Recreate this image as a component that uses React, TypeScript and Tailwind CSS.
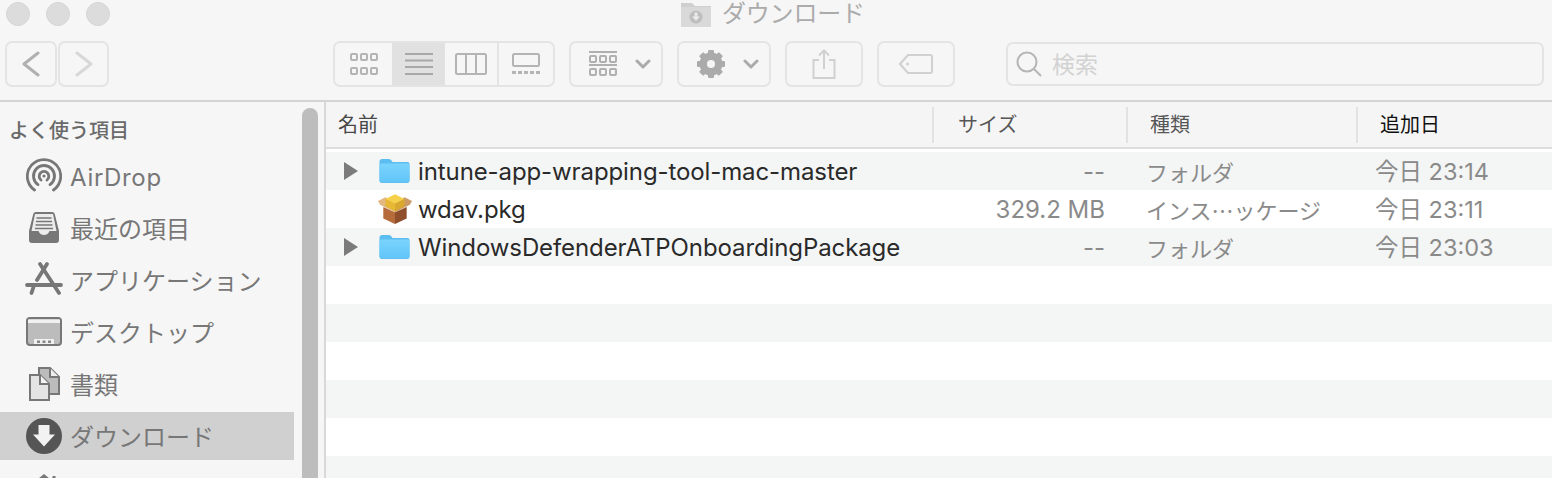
import type { ReactNode } from 'react'

const font = { sans: 'font-["Inter","Noto_Sans_CJK_JP",sans-serif]' }

function ToolButton({ className, children }: { className: string; children: ReactNode }) {
  return (
    <div className={`flex h-[46px] items-center justify-center rounded-[7px] border-2 border-[#e4e4e4] ${className}`}>
      {children}
    </div>
  )
}

function Folder() {
  return (
    <svg width="31" height="26" viewBox="0 0 31 26">
      <defs>
        <linearGradient id="folderBody" x1="0" y1="0" x2="0" y2="1">
          <stop offset="0" stopColor="#7ad3fd" />
          <stop offset="1" stopColor="#62c5f8" />
        </linearGradient>
      </defs>
      <path d="M0.500 3.500Q0.500 1 3 1H10Q11.500 1 12.500 2.500L13.500 4H28.500Q30.500 4 30.500 6V22.500Q30.500 25 28 25H3Q0.500 25 0.500 22.500Z" fill="#5cbdf0" />
      <path d="M0.500 7Q0.500 5.500 2.500 5.500H28.500Q30.500 5.500 30.500 7V22.500Q30.500 24.200 28 24.200H3Q0.500 24.200 0.500 22.500Z" fill="url(#folderBody)" />
    </svg>
  )
}

function Pkg() {
  return (
    <svg width="34" height="30" viewBox="1 1 32 28">
      <path d="M6 13L17 18V29L6 24Z" fill="#b56b3a" />
      <path d="M28 13L17 18V29L28 24Z" fill="#8f4f2b" />
      <path d="M17 18L3 11L1 7.500L8 4L17 9Z" fill="#e2b781" />
      <path d="M17 18L31 11L33 7.500L26 4L17 9Z" fill="#cc9a66" />
      <path d="M8 5.500L17 1L26 5.500L17 10Z" fill="#f5d04a" />
      <path d="M8 5.500L17 10V17L8 12.500Z" fill="#e6b834" />
      <path d="M26 5.500L17 10V17L26 12.500Z" fill="#d8a92e" />
    </svg>
  )
}

function Caret() {
  return (
    <svg width="16" height="20" viewBox="0 0 16 20">
      <path d="M1 1L15 10L1 19Z" fill="#7b7b7b" />
    </svg>
  )
}

const rows = [
  { name: 'intune-app-wrapping-tool-mac-master', size: '--', kind: 'フォルダ', date: '今日 23:14', folder: true },
  { name: 'wdav.pkg', size: '329.2 MB', kind: 'インス…ッケージ', date: '今日 23:11', folder: false },
  { name: 'WindowsDefenderATPOnboardingPackage', size: '--', kind: 'フォルダ', date: '今日 23:03', folder: true },
]

const sideIcons: Record<string, ReactNode> = {
  airdrop: (
    <svg width="36" height="36" viewBox="0 0 36 36" fill="none" stroke="#777" strokeWidth="2.800" strokeLinecap="round">
      <path d="M8.500 32A16.700 16.700 0 1 1 27.500 32" />
      <path d="M12 26.600A10.500 10.500 0 1 1 24 26.600" />
      <path d="M15 22A4.800 4.800 0 1 1 21 22" />
      <circle cx="18" cy="18" r="1.600" fill="#777" stroke="none" />
    </svg>
  ),
  recent: (
    <svg width="34" height="34" viewBox="0 0 34 34">
      <path d="M6 4Q6.500 1 9 1H25Q27.500 1 28 4L32 20V29Q32 32 29 32H5Q2 32 2 29V20Z" fill="#777" />
      <path d="M8 3H26L29.500 20H22.500Q21 24 17 24Q13 24 11.500 20H4.500Z" fill="#ececec" />
      <path d="M9.500 7H24.500M9 10.500H25M8.500 14H25.500M8 17.500H26" stroke="#777" strokeWidth="1.500" />
    </svg>
  ),
  apps: (
    <svg width="38" height="36" viewBox="0 0 38 36" fill="none" stroke="#777" strokeLinecap="round">
      <path d="M15 2L34 31" strokeWidth="3.800" />
      <path d="M22 2L12 18" strokeWidth="3.800" />
      <path d="M8.500 25L6.500 31" strokeWidth="3.800" />
      <path d="M2 23H36" strokeWidth="3.800" />
    </svg>
  ),
  desktop: (
    <svg width="36" height="30" viewBox="0 0 36 30">
      <rect x="1" y="1" width="34" height="27" rx="3" fill="#bcbcbc" stroke="#777" strokeWidth="2" />
      <path d="M2 2.500H34V6H2Z" fill="#f0f0f0" />
      <path d="M8 27V22H28V27Z" fill="#f0f0f0" />
      <path d="M11 23.500H14V26H11ZM16.500 23.500H19.500V26H16.500ZM22 23.500H25V26H22Z" fill="#888" />
    </svg>
  ),
  docs: (
    <svg width="33" height="34" viewBox="0 0 33 34">
      <path d="M11 1H22L31 10V27H11Z" fill="#bcbcbc" stroke="#777" strokeWidth="2" />
      <path d="M22 1V10H31" fill="#eee" stroke="#777" strokeWidth="2" />
      <path d="M2 8H12L21 17V33H2Z" fill="#e4e4e4" stroke="#777" strokeWidth="2" />
      <path d="M12 8V17H21" fill="#f4f4f4" stroke="#777" strokeWidth="2" />
    </svg>
  ),
  downloads: (
    <svg width="36" height="36" viewBox="0 0 36 36">
      <circle cx="18" cy="18" r="18" fill="#555" />
      <path d="M12.500 7H23.500V16.500H29L18 28.500L7 16.500H12.500Z" fill="#f2f2f2" />
    </svg>
  ),
  home: (
    <svg width="36" height="30" viewBox="0 0 36 30" fill="none" stroke="#777" strokeWidth="3">
      <path d="M2 16L18 3L34 16" />
      <path d="M28 3V10" />
      <path d="M7 14V30H29V14" />
    </svg>
  ),
}

const side = [
  { icon: 'airdrop', label: 'AirDrop', wide: true },
  { icon: 'recent', label: '最近の項目' },
  { icon: 'apps', label: 'アプリケーション' },
  { icon: 'desktop', label: 'デスクトップ' },
  { icon: 'docs', label: '書類' },
  { icon: 'downloads', label: 'ダウンロード', active: true },
  { icon: 'home', label: '' },
]

export default function App() {
  return (
    <div className={`flex h-[478px] w-[1552px] flex-col overflow-hidden bg-[#f6f6f6] ${font.sans}`}>
      {/* toolbar */}
      <header className="h-[102px] shrink-0 border-b-2 border-[#d4d4d4]">
        <div className="flex h-[28px]">
          <div className="flex gap-[16px] pl-[6px] pt-[2px]">
            <span className="h-[24px] w-[24px] rounded-full border border-[#d6d6d6] bg-[#dcdcdc]" />
            <span className="h-[24px] w-[24px] rounded-full border border-[#d6d6d6] bg-[#dcdcdc]" />
            <span className="h-[24px] w-[24px] rounded-full border border-[#d6d6d6] bg-[#dcdcdc]" />
          </div>
          <div className="ml-[571px] flex items-start gap-[11px]">
            <svg width="30" height="25" viewBox="0 0 30 25" className="mt-[2px]">
              <path d="M0 1H11L14 4H30V25H0Z" fill="#cfcfcf" />
              <path d="M0 5H30V25H0Z" fill="#d9d9d9" />
              <circle cx="15" cy="15" r="6.500" fill="#bdbdbd" />
              <path d="M13.500 10.500H16.500V14.500H19L15 19L11 14.500H13.500Z" fill="#e8e8e8" />
            </svg>
            <span className="text-[24px] leading-[28px] tracking-[-0.2px] text-[#ababab]">ダウンロード</span>
          </div>
        </div>
        <div className="mt-[13px] flex items-start">
          <div className="ml-[5px] flex gap-px">
            <ToolButton className="w-[52px]">
              <svg width="22" height="26" viewBox="0 0 22 26" fill="none" stroke="#b0b0b0" strokeWidth="3" strokeLinecap="round" strokeLinejoin="round">
                <path d="M18 2L4 13L18 24" />
              </svg>
            </ToolButton>
            <ToolButton className="w-[51px]">
              <svg width="22" height="26" viewBox="0 0 22 26" fill="none" stroke="#d8d8d8" strokeWidth="3" strokeLinecap="round" strokeLinejoin="round">
                <path d="M4 2L18 13L4 24" />
              </svg>
            </ToolButton>
          </div>

          <ToolButton className="ml-[224px] w-[222px] !justify-start overflow-hidden">
            <div className="flex h-full w-[57px] items-center justify-center">
              <svg width="28" height="22" viewBox="0 0 28 22" fill="none" stroke="#b4b4b4" strokeWidth="2">
                <rect x="1" y="1" width="6" height="6" rx="1" /><rect x="11" y="1" width="6" height="6" rx="1" /><rect x="21" y="1" width="6" height="6" rx="1" />
                <rect x="1" y="15" width="6" height="6" rx="1" /><rect x="11" y="15" width="6" height="6" rx="1" /><rect x="21" y="15" width="6" height="6" rx="1" />
              </svg>
            </div>
            <div className="flex h-full w-[53px] items-center justify-center bg-[#e1e1e1]">
              <svg width="28" height="22" viewBox="0 0 28 22" stroke="#a8a8a8" strokeWidth="2">
                <path d="M0 1H28M0 7.500H28M0 14H28M0 21H28" />
              </svg>
            </div>
            <div className="flex h-full w-[54px] items-center justify-center border-r-2 border-[#e4e4e4]">
              <svg width="32" height="22" viewBox="0 0 32 22" fill="none" stroke="#b4b4b4" strokeWidth="2">
                <rect x="1" y="1" width="30" height="20" rx="1.500" />
                <path d="M11 1V21M21 1V21" />
              </svg>
            </div>
            <div className="flex h-full flex-1 items-center justify-center">
              <svg width="28" height="22" viewBox="0 0 28 22" fill="none" stroke="#b4b4b4" strokeWidth="2">
                <rect x="1" y="1" width="26" height="12" rx="1.500" />
                <path d="M0 19.500H4M6 19.500H10M12 19.500H16M18 19.500H22M24 19.500H28" strokeWidth="3" />
              </svg>
            </div>
          </ToolButton>

          <ToolButton className="ml-[14px] w-[94px] gap-[18px] pl-[8px]">
            <svg width="28" height="26" viewBox="0 0 28 26" fill="none" stroke="#b0b0b0" strokeWidth="2">
              <path d="M0 1H28M0 14H28" />
              <rect x="1" y="5" width="6" height="6" rx="1" /><rect x="11" y="5" width="6" height="6" rx="1" /><rect x="21" y="5" width="6" height="6" rx="1" />
              <rect x="1" y="18" width="6" height="6" rx="1" /><rect x="11" y="18" width="6" height="6" rx="1" /><rect x="21" y="18" width="6" height="6" rx="1" />
            </svg>
            <svg width="16" height="10" viewBox="0 0 16 10" fill="none" stroke="#ababab" strokeWidth="3" strokeLinecap="round" strokeLinejoin="round">
              <path d="M2 2L8 8L14 2" />
            </svg>
          </ToolButton>

          <ToolButton className="ml-[14px] w-[94px] gap-[18px] pl-[8px]">
            <svg width="28" height="28" viewBox="0 0 28 28">
              <g fill="#ababab">
                <rect x="11" y="0" width="6" height="28" rx="1" />
                <rect x="11" y="0" width="6" height="28" rx="1" transform="rotate(45 14 14)" />
                <rect x="11" y="0" width="6" height="28" rx="1" transform="rotate(90 14 14)" />
                <rect x="11" y="0" width="6" height="28" rx="1" transform="rotate(135 14 14)" />
              </g>
              <circle cx="14" cy="14" r="9" fill="none" stroke="#ababab" strokeWidth="5" />
              <circle cx="14" cy="14" r="4" fill="#f6f6f6" />
            </svg>
            <svg width="16" height="10" viewBox="0 0 16 10" fill="none" stroke="#ababab" strokeWidth="3" strokeLinecap="round" strokeLinejoin="round">
              <path d="M2 2L8 8L14 2" />
            </svg>
          </ToolButton>

          <ToolButton className="ml-[14px] w-[78px]">
            <svg width="24" height="30" viewBox="0 0 24 30" fill="none" stroke="#d0d0d0" strokeWidth="2">
              <path d="M7 11H1.500V29H22.500V11H17" />
              <path d="M12 20V2M7 6.500L12 1.500L17 6.500" />
            </svg>
          </ToolButton>

          <ToolButton className="ml-[14px] w-[78px]">
            <svg width="34" height="20" viewBox="0 0 34 20" fill="none" stroke="#d0d0d0" strokeWidth="2">
              <path d="M9 1H31Q33 1 33 3V17Q33 19 31 19H9L1 10Z" />
              <circle cx="8.500" cy="10" r="1.500" fill="#d0d0d0" stroke="none" />
            </svg>
          </ToolButton>

          <div className="ml-[51px] mt-px flex h-[44px] w-[538px] items-center gap-[10px] rounded-[7px] border-2 border-[#e4e4e4] pl-[8px]">
            <svg width="26" height="26" viewBox="0 0 26 26" fill="none" stroke="#b5b5b5" strokeWidth="2">
              <circle cx="11" cy="11" r="9.500" />
              <path d="M18 18L25 25" />
            </svg>
            <span className="pt-[3px] text-[23px] text-[#d2d2d2]">検索</span>
          </div>
        </div>
      </header>

      <div className="flex min-h-0 flex-1">
        {/* sidebar */}
        <aside className="flex w-[326px] shrink-0 overflow-hidden border-r-2 border-[#d8d8d8]">
          <nav className="w-[294px] shrink-0 pt-[15px]">
            <div className="pl-[9px] text-[20px] font-medium leading-[28px] text-[#6a6a6a]">よく使う項目</div>
            <ul className="mt-[7px] flex flex-col gap-[4px]">
              {side.map((item) => (
                <li
                  key={item.icon}
                  className={`flex h-[48px] items-center ${item.active ? 'bg-[#d0d0d0]' : ''}`}
                >
                  <span className="flex w-[70px] shrink-0 justify-center pl-[18px]">{sideIcons[item.icon]}</span>
                  <span className={`pt-[3px] text-[24px] leading-[30px] text-[#777777] ${item.wide ? 'tracking-[0.7px]' : ''}`}>{item.label}</span>
                </li>
              ))}
            </ul>
          </nav>
          <div className="ml-[8px] mt-[6px] h-[500px] w-[16px] rounded-full bg-[#bdbdbd]" />
        </aside>

        {/* file list */}
        <main className="min-w-0 flex-1 bg-white">
          <div className="grid h-[47px] grid-cols-[606px_194px_230px_1fr] items-center border-b-2 border-[#dedede] bg-[#f5f5f5] text-[20px]">
            <div className="pl-[12px] text-[#484848]">名前</div>
            <div className="flex h-[36px] items-center border-l-2 border-[#e2e2e2] pl-[24px] text-[#565656]">サイズ</div>
            <div className="flex h-[36px] items-center border-l-2 border-[#e2e2e2] pl-[22px] text-[#565656]">種類</div>
            <div className="flex h-[36px] items-center border-l-2 border-[#e2e2e2] pl-[22px] text-[#111111]">追加日</div>
          </div>
          <div className="pt-[3px]">
            {rows.map((row, i) => (
              <div
                key={row.name}
                className={`grid h-[38px] grid-cols-[36px_32px_500px_194px_270px_1fr] items-center pl-[17px] ${i % 2 === 0 ? 'bg-[#f4f5f5]' : 'bg-white'}`}
              >
                <span>{row.folder && <Caret />}</span>
                <span className="flex justify-start">{row.folder ? <Folder /> : <span className="-ml-[1px]"><Pkg /></span>}</span>
                <span className="whitespace-nowrap pl-[7px] pt-px text-[24px] tracking-[-0.1px] text-[#2a2a2a]">{row.name}</span>
                <span className="whitespace-nowrap pt-px text-right text-[24px] text-[#8a8a8a]">{row.size}</span>
                <span className='whitespace-nowrap pl-[41px] font-["Noto_Sans_CJK_JP",sans-serif] text-[22px] text-[#8a8a8a]'>{row.kind}</span>
                <span className="whitespace-nowrap pt-px text-[23.500px] text-[#8a8a8a]">{row.date}</span>
              </div>
            ))}
            <div className="h-[38px] bg-white" />
            <div className="h-[38px] bg-[#f4f5f5]" />
            <div className="h-[38px] bg-white" />
            <div className="h-[38px] bg-[#f4f5f5]" />
            <div className="h-[38px] bg-white" />
            <div className="h-[38px] bg-[#f4f5f5]" />
          </div>
        </main>
      </div>
    </div>
  )
}
